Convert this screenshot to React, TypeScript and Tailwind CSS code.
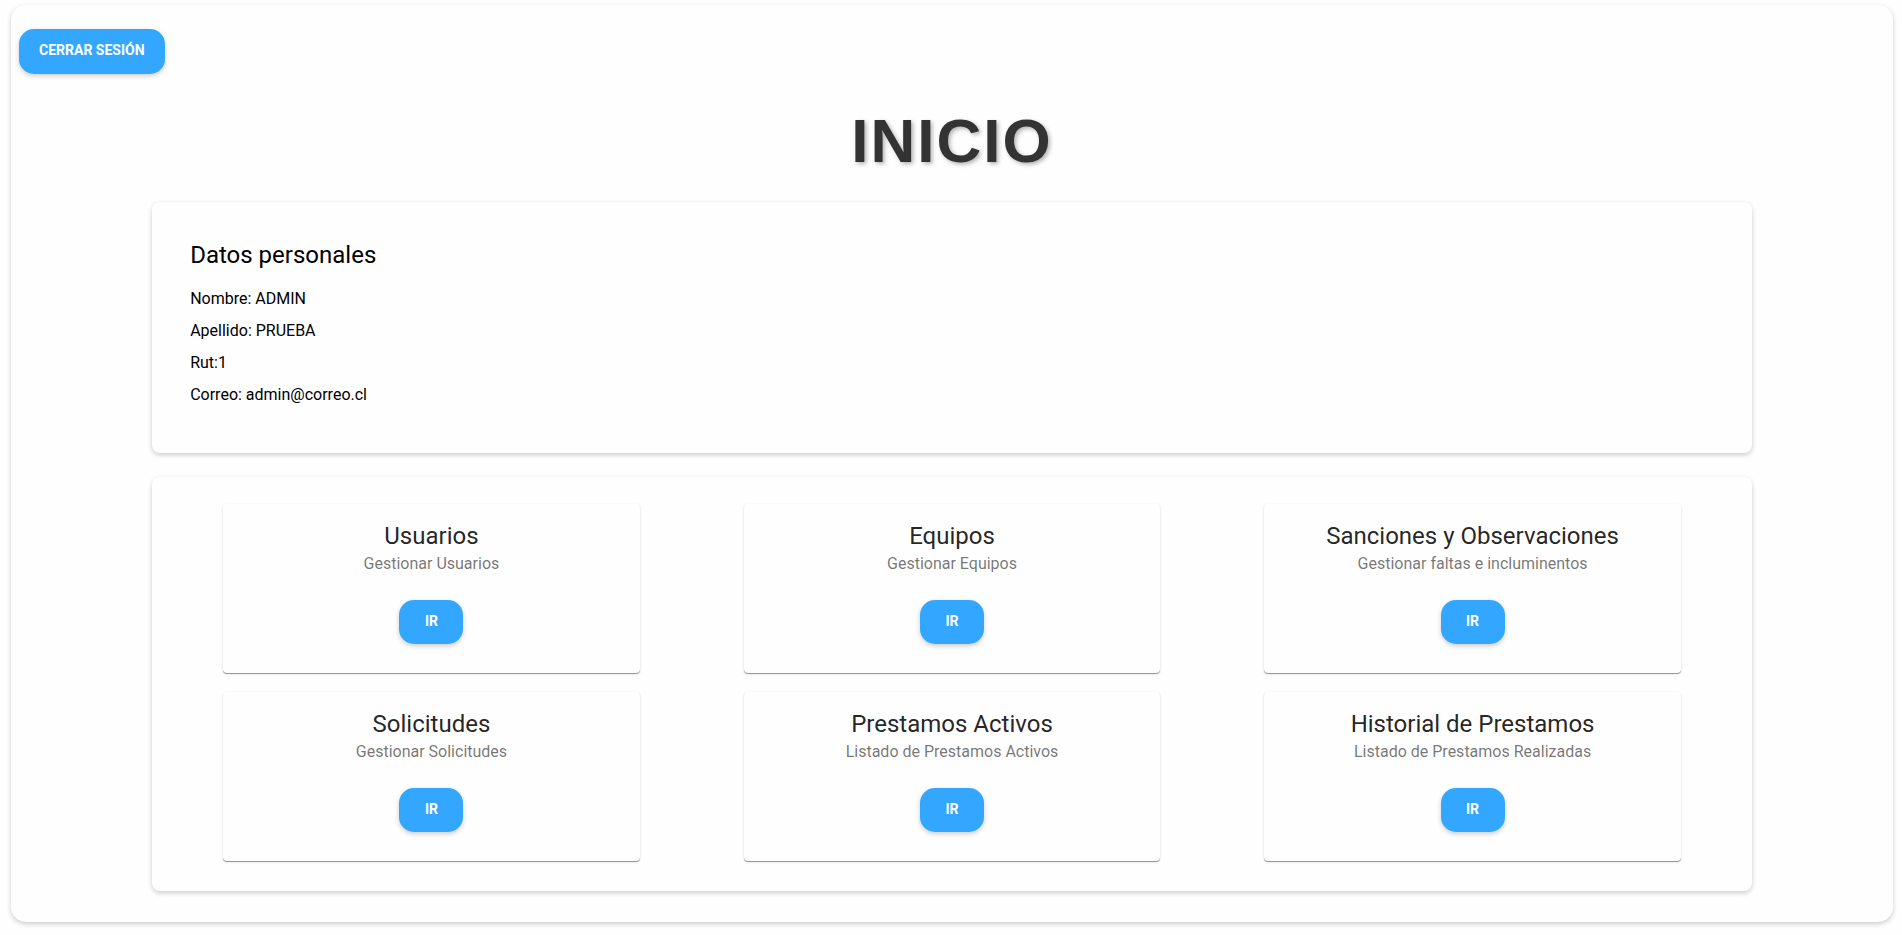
const SECTIONS = [
  { title: "Usuarios", description: "Gestionar Usuarios" },
  { title: "Equipos", description: "Gestionar Equipos" },
  { title: "Sanciones y Observaciones", description: "Gestionar faltas e incluminentos" },
  { title: "Solicitudes", description: "Gestionar Solicitudes" },
  { title: "Prestamos Activos", description: "Listado de Prestamos Activos" },
  { title: "Historial de Prestamos", description: "Listado de Prestamos Realizadas" },
];

const PERSONAL_DATA = ["Nombre: ADMIN", "Apellido: PRUEBA", "Rut:1", "Correo: admin@correo.cl"];

const BUTTON =
  "cursor-pointer rounded-[15px] bg-[#33a7ff] pb-[2px] text-[14px] font-bold text-white uppercase shadow-[0_2px_5px_rgba(0,0,0,0.2)] hover:bg-[#1e98f5]";

const PANEL = "mx-auto w-[85%] rounded-lg bg-[#fefefe] shadow-[0_2px_5px_rgba(0,0,0,0.2)]";

function SectionCard({ title, description }: { title: string; description: string }) {
  return (
    <article className="mx-auto flex w-4/5 flex-col items-center rounded bg-[#fefefe] px-4 pt-4 pb-[29px] text-center shadow-[0_1px_0_-0px_rgba(0,0,0,0.25),0_1px_1px_0_rgba(0,0,0,0.14),0_1px_3px_0_rgba(0,0,0,0.12)]">
      <h2 className="text-2xl leading-8 text-black/87">{title}</h2>
      <p className="mb-6 text-base leading-6 text-black/55">{description}</p>
      <button type="button" aria-label={`IR a ${title}`} className={`${BUTTON} h-11 w-16`}>
        IR
      </button>
    </article>
  );
}

export default function App() {
  return (
    <div className="bg-[#fefefe] pt-[5px] pr-[9px] pb-[13px] pl-[11px] font-['Roboto',sans-serif] font-normal">
      <main className="rounded-[15px] bg-[#fefefe] pt-6 pb-[31px] shadow-[0_2px_5px_rgba(0,0,0,0.2)]">
        <div className="flex px-2">
          <button type="button" className={`${BUTTON} h-[45px] px-5`}>
            Cerrar sesión
          </button>
        </div>
        <h1 className="mt-[33px] mb-[27px] text-center font-['Liberation_Sans',sans-serif] text-[62px] leading-[68px] font-bold tracking-[2px] text-[#333] text-shadow-[2px_2px_4px_rgba(0,0,0,0.3)]">
          INICIO
        </h1>
        <section className={`${PANEL} px-[38px] pt-[37px] pb-[42px]`}>
          <h2 className="mb-3 text-2xl leading-8 text-black">Datos personales</h2>
          {PERSONAL_DATA.map((line) => (
            <p key={line} className="text-base leading-8 text-black">
              {line}
            </p>
          ))}
        </section>
        <section className={`${PANEL} mt-6 grid grid-cols-3 gap-y-[19px] px-[19px] pt-[27px] pb-[30px]`}>
          {SECTIONS.map((section) => (
            <SectionCard key={section.title} {...section} />
          ))}
        </section>
      </main>
    </div>
  );
}
